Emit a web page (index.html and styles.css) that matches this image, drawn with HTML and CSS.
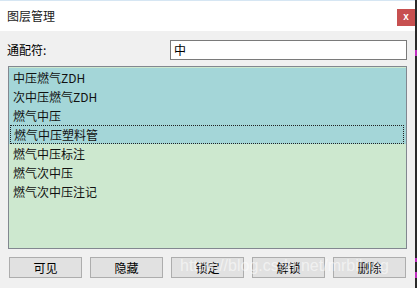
FILE: index.html
```html
<!DOCTYPE html>
<html>
<head>
<meta charset="utf-8">
<link rel="stylesheet" href="styles.css">
</head>
<body>
<div class="window">
  <div class="main">
    <div class="titlebar">
      <span class="title">图层管理</span>
      <span class="close">x</span>
    </div>
    <div class="content">
      <div class="filter-row">
        <span class="label">通配符:</span>
        <div class="input">中</div>
      </div>
      <div class="list">
        <div class="item sel">中压燃气ZDH</div>
        <div class="item sel">次中压燃气ZDH</div>
        <div class="item sel">燃气中压</div>
        <div class="item sel focus"><span>燃气中压塑料管</span></div>
        <div class="item">燃气中压标注</div>
        <div class="item">燃气次中压</div>
        <div class="item">燃气次中压注记</div>
      </div>
      <div class="buttons">
        <div class="btn">可见</div>
        <div class="btn">隐藏</div>
        <div class="btn">锁定</div>
        <div class="btn">解锁</div>
        <div class="btn">删除</div>
      </div>
      <div class="watermark">https://blog.csdn.net/mrbilong</div>
    </div>
  </div>
  <div class="edge"><i class="m1"></i><i class="m2"></i><i class="m3"></i></div>
</div>
</body>
</html>
```
FILE: styles.css
```css
html, body {
  margin: 0;
  padding: 0;
  width: 417px;
  height: 288px;
  overflow: hidden;
  background: #f0f0f0;
  font-family: "Noto Sans CJK SC", "Microsoft YaHei", sans-serif;
  font-size: 12px;
  color: #000;
}
.window {
  display: flex;
  width: 417px;
  height: 288px;
}
.main {
  flex: 1;
  display: flex;
  flex-direction: column;
  background: #f0f0f0;
}
.titlebar {
  height: 31px;
  background: #fff;
  border-top: 1px solid #d6e6f3;
  box-sizing: border-box;
  display: flex;
  align-items: flex-start;
  justify-content: space-between;
}
.title {
  margin: 6px 0 0 7px;
  line-height: 18px;
  color: #1a1a1a;
}
.close {
  margin-top: 8px;
  width: 18px;
  height: 17px;
  background: #c75050;
  color: #fff;
  font-family: "Liberation Sans", Arial, sans-serif;
  font-weight: bold;
  font-size: 10px;
  line-height: 16px;
  text-align: center;
}
.content {
  position: relative;
  flex: 1;
  display: flex;
  flex-direction: column;
}
.filter-row {
  display: flex;
  align-items: center;
  margin-top: 9px;
  height: 20px;
}
.label {
  margin-left: 7px;
  width: 163px;
  line-height: 20px;
}
.input {
  width: 237px;
  height: 20px;
  box-sizing: border-box;
  border: 1px solid #7a7a7a;
  background: #fff;
  padding-left: 3px;
  line-height: 18px;
}
.list {
  margin: 6px 0 0 8px;
  width: 399px;
  height: 183px;
  box-sizing: border-box;
  border: 1px solid #828790;
  background: #cde8cf;
  padding-top: 1px;
}
.item {
  height: 19px;
  line-height: 19px;
  padding-left: 4px;
  color: #111;
}
.item.sel {
  background: #a4d6d8;
}
.item.focus {
  position: relative;
  padding-left: 0;
  margin: 0 2px 0 1px;
  border: 1px dotted #222;
  height: 17px;
  line-height: 17px;
  padding-left: 3px;
  box-shadow: -1px 0 0 #a4d6d8, 2px 0 0 #a4d6d8;
}
.buttons {
  display: flex;
  gap: 8px;
  margin: 8px 0 0 9px;
}
.btn {
  width: 73px;
  height: 21px;
  box-sizing: border-box;
  border: 1px solid #adadad;
  background: #e1e1e1;
  text-align: center;
  line-height: 19px;
}
.watermark {
  position: absolute;
  left: 180px;
  top: 226px;
  font-family: "Liberation Sans", Arial, sans-serif;
  font-size: 16px;
  color: rgba(255, 255, 255, 0.55);
  white-space: nowrap;
}
.edge {
  position: relative;
  width: 2px;
  background: #2a2a2a;
}
.edge i {
  position: absolute;
  left: 0;
  width: 2px;
  background: #c030c0;
}
.m1 { top: 50px; height: 6px; }
.m2 { top: 258px; height: 4px; }
.m3 { top: 272px; height: 6px; }
```
